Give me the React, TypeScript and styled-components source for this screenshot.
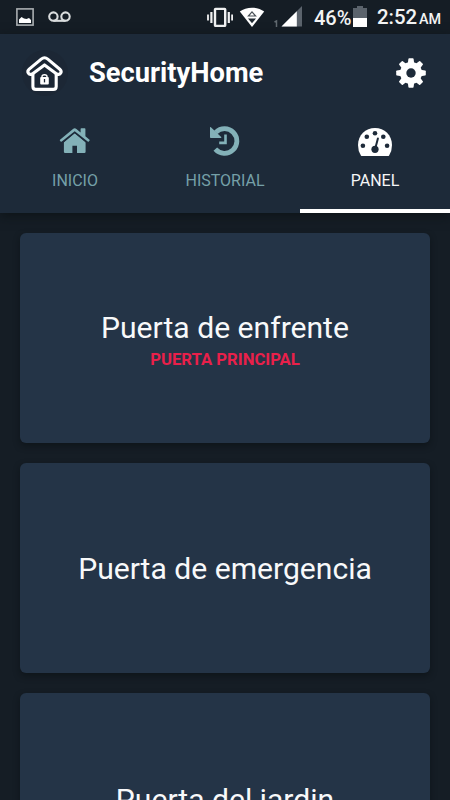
import React from "react";
import styled, { createGlobalStyle } from "styled-components";

const GlobalStyle = createGlobalStyle`
  * { box-sizing: border-box; }
  body {
    margin: 0;
    background: #151d25;
    font-family: Roboto, "Liberation Sans", sans-serif;
  }
  svg { display: block; flex: none; }
`;

const Screen = styled.div`
  width: 450px;
  height: 800px;
  overflow: hidden;
  display: flex;
  flex-direction: column;
  background: #151d25;
`;

const StatusBar = styled.div`
  flex: none;
  height: 34px;
  padding: 0 10px 0 16px;
  display: flex;
  align-items: center;
  justify-content: space-between;
  background: #151d25;
  color: #f3f4f4;
`;

const StatusGroup = styled.div<{ $gap: number }>`
  display: flex;
  align-items: center;
  gap: ${(p) => p.$gap}px;
`;

const SignalGroup = styled(StatusGroup)`
  padding-bottom: 1px;
`;

const StatusText = styled.span<{ $size: number; $width: number }>`
  font-size: ${(p) => p.$size}px;
  font-weight: 500;
  line-height: 20px;
  width: ${(p) => p.$width}px;
  white-space: nowrap;
`;

const Clock = styled.div`
  display: flex;
  align-items: baseline;
  gap: 2px;
  margin-left: 10px;
  padding-top: 3px;
`;

const Battery = styled.div`
  display: flex;
  align-items: center;
  margin-left: 12px;
  padding-bottom: 2px;
  span { padding-top: 4px; }
`;

const Header = styled.header`
  flex: none;
  position: relative;
  height: 179px;
  background: #1d2a39;
  box-shadow: 0 3px 10px rgba(10, 15, 18, 0.7);
`;

const TitleRow = styled.div`
  height: 78px;
  padding: 0 24px 0 22px;
  display: flex;
  align-items: center;
`;

const Title = styled.h1`
  flex: 1;
  margin: 0 0 0 21px;
  font-size: 27.3px;
  font-weight: 700;
  line-height: 32px;
  color: #fff;
`;

const Tabs = styled.nav`
  display: grid;
  grid-template-columns: repeat(3, 1fr);
  height: 101px;
`;

const Tab = styled.div<{ $active?: boolean }>`
  display: flex;
  flex-direction: column;
  align-items: center;
  padding-top: 12px;
  border-bottom: 4px solid ${(p) => (p.$active ? "#fff" : "transparent")};
  color: ${(p) => (p.$active ? "#fff" : "#83b1b8")};
`;

const TabLabel = styled.span<{ $active?: boolean }>`
  margin-top: 11px;
  font-size: 16px;
  line-height: 20px;
  color: ${(p) => (p.$active ? "#f5f6f7" : "#75a0a8")};
`;

const CardList = styled.main`
  display: flex;
  flex-direction: column;
  gap: 20px;
  padding: 19.5px 20px 0;
`;

const Card = styled.section`
  flex: none;
  height: 210.3px;
  border-radius: 6px;
  background: #243447;
  box-shadow: 0 3px 6px rgba(10, 15, 18, 0.55);
  display: flex;
  flex-direction: column;
  align-items: center;
  justify-content: center;
`;

const CardTitle = styled.h2`
  margin: 0;
  padding-top: 3px;
  font-size: 30.1px;
  font-weight: 400;
  line-height: 40px;
  color: #f8f9fa;
`;

const CardTag = styled.span`
  font-size: 16.7px;
  font-weight: 700;
  line-height: 23px;
  color: #e9204a;
`;

const PictureIcon = () => (
  <svg width="18" height="18" viewBox="0 0 18 18">
    <rect x="0.9" y="0.9" width="16.2" height="16.2" fill="none" stroke="#a9aeb1" strokeWidth="1.6" />
    <path d="M3 15V11.5L5.5 9L8 10.5L10.5 11L13 10L15 12V15Z" fill="#fff" />
  </svg>
);

const VoicemailIcon = () => (
  <svg width="23" height="12" viewBox="0 0 23 12" fill="none" stroke="#d9dcdd" strokeWidth="2.1">
    <circle cx="5.4" cy="5.6" r="4.2" />
    <circle cx="17.5" cy="5.6" r="4.2" />
    <path d="M5.4 9.8H17.5" />
  </svg>
);

const VibrateIcon = () => (
  <svg width="26" height="20" viewBox="0 0 26 20" fill="none" stroke="#f0f1f2">
    <rect x="8" y="1.9" width="10.2" height="17" rx="0.6" strokeWidth="2.4" />
    <path d="M4.4 5V16M21.8 5V16" strokeWidth="2.2" />
    <path d="M1 7.5V13.5M25.1 7.5V13.5" strokeWidth="1.8" />
  </svg>
);

const WifiIcon = () => (
  <svg width="26" height="20" viewBox="0 0 26 20">
    <path d="M.8 4.6C7-.7 19-.7 25.2 4.6L13 20Z" fill="#fff" />
    <path d="M9.4 9L13 4.9L16.6 9Z" fill="#fff" stroke="#4b5359" strokeWidth="1.2" />
    <path d="M9 11.4H17L13 16.2Z" fill="#202a32" />
  </svg>
);

const SignalIcon = () => (
  <svg width="29" height="21" viewBox="0 0 29 21">
    <path d="M1.5 16L3.5 15V21" fill="none" stroke="#626a70" strokeWidth="1.5" />
    <path d="M8.5 20.6L29 .1V20.6Z" fill="#5b636c" />
    <path d="M8.5 20.6L23.8 5.3V20.6Z" fill="#fff" />
  </svg>
);

const BatteryIcon = () => (
  <svg width="14" height="21" viewBox="0 0 14 21">
    <path d="M0 2H4V0H10V2H14V21H0Z" fill="#5b636c" />
    <path d="M0 12H14V21H0Z" fill="#fff" />
  </svg>
);

const LogoIcon = () => (
  <svg width="46" height="48" viewBox="0 0 46 48">
    <circle cx="23" cy="24" r="23" fill="#1c2735" />
    <path
      d="M10.3 25C6.8 26.6 4.3 22.7 7.2 20.2L19.2 10.1Q22.5 7.4 25.8 10.1L37.8 20.2C40.7 22.7 38.2 26.6 34.7 25L22.5 15.9Z"
      fill="none"
      stroke="#fff"
      strokeWidth="3.1"
      strokeLinejoin="round"
    />
    <path d="M10.9 24.8V37.4Q10.9 40.4 13.9 40.4H31.2Q34.2 40.4 34.2 37.4V24.8" fill="none" stroke="#fff" strokeWidth="3.1" />
    <rect x="18.2" y="28" width="8.6" height="7.4" rx="1" fill="#fff" />
    <path d="M20 28.5V27.6Q20 25.7 22.5 25.7Q25 25.7 25 27.6V28.5" fill="none" stroke="#fff" strokeWidth="1.4" />
    <path d="M22.5 30V33.4" stroke="#1c2735" strokeWidth="1.3" />
  </svg>
);

const GearIcon = () => (
  <svg width="30" height="30" viewBox="0 0 30 30" fill="#fff">
    <mask id="gearHole">
      <rect width="30" height="30" fill="#fff" />
      <circle cx="15" cy="15" r="4.7" fill="#000" />
    </mask>
    <g mask="url(#gearHole)">
      <circle cx="15" cy="15" r="11" />
      {[0, 45, 90, 135, 180, 225, 270, 315].map((angle) => (
        <path key={angle} d="M11.6 7L12.4 .9Q12.5 .2 13.2 .2H16.8Q17.5 .2 17.6 .9L18.4 7Z" transform={`rotate(${angle} 15 15)`} />
      ))}
    </g>
  </svg>
);

const HomeIcon = () => (
  <svg width="32" height="36" viewBox="0 0 32 36">
    <path
      d="M4.9 18L15.7 9L26.6 18V27.8Q26.6 29 25.4 29H18V21.8H13.4V29H6.1Q4.9 29 4.9 27.8Z"
      fill="currentColor"
    />
    <path d="M3.4 18.7L15.7 8.5L28.1 18.7" fill="none" stroke="#1d2a39" strokeWidth="1.2" />
    <path
      d="M1.6 17.4L.9 16.6Q.5 16.1 1 15.7L14 4.9Q15.7 3.6 17.4 4.9L21.6 8.4V5Q21.6 4.2 22.3 4.2H25.7Q26.4 4.2 26.4 5V12.3L30.5 15.7Q31 16.1 30.6 16.6L29.8 17.5Q29.3 18 28.7 17.5L15.7 7.2L2.8 17.6Q2.1 18 1.6 17.4Z"
      fill="currentColor"
    />
  </svg>
);

const HistoryIcon = () => (
  <svg width="32" height="36" viewBox="0 0 32 36" fill="none" stroke="currentColor">
    <path d="M6.8 8.4A12.3 12.3 0 1 1 6.3 25.1" strokeWidth="4.8" />
    <path d="M1 3.3Q1.2 2.6 1.9 3.2L12.2 13.1Q12.8 14 11.8 14H1.8Q1 14 1 13.2Z" fill="currentColor" stroke="none" />
    <path d="M16.5 10.5V18.9H10.2" strokeWidth="2.6" />
  </svg>
);

const GaugeIcon = () => (
  <svg width="34" height="36" viewBox="0 0 34 36">
    <path d="M2.9 31.5Q0 27 0 21C0 11 7.5 4 17 4S34 11 34 21Q34 27 31.1 31.5Q30.7 32 30 32H4Q3.3 32 2.9 31.5Z" fill="#fff" />
    <g fill="#1d2a39">
      <circle cx="4.9" cy="21.7" r="2.3" />
      <circle cx="8.8" cy="12.8" r="2.3" />
      <circle cx="17" cy="9.3" r="2.3" />
      <circle cx="25.3" cy="12.8" r="2.3" />
      <circle cx="29.1" cy="21.7" r="2.3" />
      <circle cx="17" cy="25.3" r="3.6" />
    </g>
    <path d="M17.4 24L19.9 14.5" stroke="#1d2a39" strokeWidth="2" strokeLinecap="round" />
  </svg>
);

const tabs = [
  { label: "INICIO", icon: <HomeIcon /> },
  { label: "HISTORIAL", icon: <HistoryIcon /> },
  { label: "PANEL", icon: <GaugeIcon />, active: true },
];

const doors = [
  { name: "Puerta de enfrente", tag: "PUERTA PRINCIPAL" },
  { name: "Puerta de emergencia" },
  { name: "Puerta del jardin" },
];

export default function App() {
  return (
    <Screen>
      <GlobalStyle />
      <StatusBar>
        <StatusGroup $gap={14}>
          <PictureIcon />
          <VoicemailIcon />
        </StatusGroup>
        <StatusGroup $gap={0}>
          <SignalGroup $gap={8}>
            <StatusGroup $gap={6}>
              <VibrateIcon />
              <WifiIcon />
            </StatusGroup>
            <SignalIcon />
          </SignalGroup>
          <Battery>
            <StatusText $size={20} $width={39}>46%</StatusText>
            <BatteryIcon />
          </Battery>
          <Clock>
            <StatusText $size={20.4} $width={40}>2:52</StatusText>
            <StatusText $size={14.4} $width={21}>AM</StatusText>
          </Clock>
        </StatusGroup>
      </StatusBar>
      <Header>
        <TitleRow>
          <LogoIcon />
          <Title>SecurityHome</Title>
          <GearIcon />
        </TitleRow>
        <Tabs>
          {tabs.map((tab) => (
            <Tab key={tab.label} $active={tab.active}>
              {tab.icon}
              <TabLabel $active={tab.active}>{tab.label}</TabLabel>
            </Tab>
          ))}
        </Tabs>
      </Header>
      <CardList>
        {doors.map((door) => (
          <Card key={door.name}>
            <CardTitle>{door.name}</CardTitle>
            {door.tag && <CardTag>{door.tag}</CardTag>}
          </Card>
        ))}
      </CardList>
    </Screen>
  );
}
